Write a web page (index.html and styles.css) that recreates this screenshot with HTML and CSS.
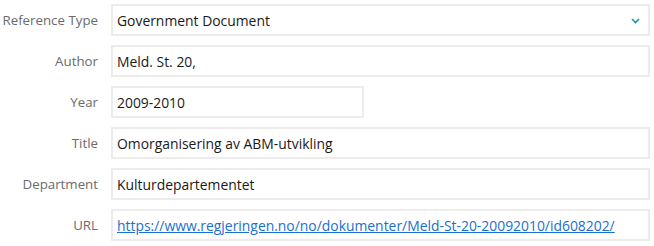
FILE: index.html
```html
<!DOCTYPE html>
<html lang="en">
<head>
    <meta charset="UTF-8">
    <meta name="viewport" content="width=device-width, initial-scale=1.0">
    <title>Reference</title>
    <link rel="stylesheet" href="styles.css">
</head>
<body>
    <form class="ref-form">
        <label class="field-label">Reference Type</label>
        <div class="field select">
            <span>Government Document</span>
            <svg class="chevron" width="9" height="6" viewBox="0 0 9 6"><path d="M1 1 L4.5 4.5 L8 1" fill="none" stroke="#1f9a9c" stroke-width="1.6"/></svg>
        </div>

        <label class="field-label">Author</label>
        <div class="field">Meld. St. 20,</div>

        <label class="field-label">Year</label>
        <div class="field short">2009-2010</div>

        <label class="field-label">Title</label>
        <div class="field">Omorganisering av ABM-utvikling</div>

        <label class="field-label">Department</label>
        <div class="field">Kulturdepartementet</div>

        <label class="field-label">URL</label>
        <div class="field"><a href="#">https://www.regjeringen.no/no/dokumenter/Meld-St-20-20092010/id608202/</a></div>
    </form>
</body>
</html>
```

FILE: styles.css
```css
body {
    margin: 0;
    background: #fff;
    font-family: "Open Sans", "Noto Sans", sans-serif;
    font-size: 13.9px;
}
.ref-form {
    display: grid;
    grid-template-columns: 98px 1fr;
    column-gap: 13px;
    row-gap: 9px;
    padding: 4px 4px 0 0;
}
.field-label {
    text-align: right;
    color: #6b6b6b;
    font-size: 13.3px;
    height: 32px;
    line-height: 32px;
}
.field {
    box-sizing: border-box;
    height: 32px;
    border: 2px solid #ececec;
    padding: 0 4px;
    display: flex;
    align-items: center;
    color: #1a1a1a;
}
.field.short {
    width: 253px;
}
.select {
    justify-content: space-between;
    padding-right: 8px;
}
.chevron {
    margin-top: 1px;
}
.field a {
    color: #1a6fd0;
    text-decoration: underline;
}
```
